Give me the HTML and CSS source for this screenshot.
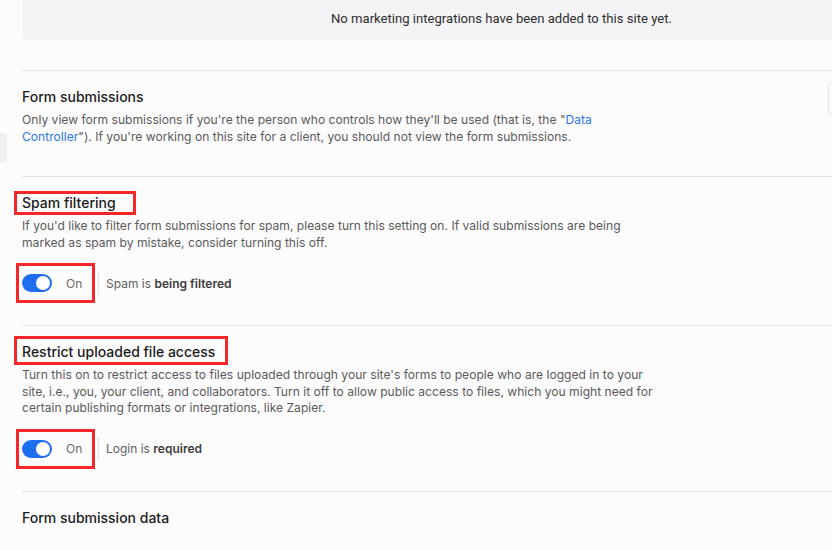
FILE: index.html
```html
<!DOCTYPE html>
<html lang="en">

<head>
    <meta charset="UTF-8">
    <meta name="viewport" content="width=device-width, initial-scale=1.0">
    <title>Form settings</title>
    <link rel="stylesheet" href="styles.css">
</head>

<body>

    <!-- bits of neighbouring panels peeking in -->
    <div class="edge-tab edge-left"></div>
    <div class="edge-tab edge-right"></div>

    <div class="panel">

        <!-- Marketing integrations -->
        <div class="empty-box">No marketing integrations have been added to this site yet.</div>

        <!-- Form submissions -->
        <div class="section first">
            <h3 class="section-title">Form submissions</h3>
            <p class="section-text">
                Only view form submissions if you're the person who controls how they'll be used (that is, the "<a href="#">Data Controller</a>"). If you're working on this site for a client, you should not view the form submissions.
            </p>
        </div>

        <!-- Spam filtering -->
        <div class="section">
            <h3 class="section-title"><span class="marked mark-title">Spam filtering</span></h3>
            <p class="section-text">
                If you'd like to filter form submissions for spam, please turn this setting on. If valid submissions are being marked as spam by mistake, consider turning this off.
            </p>
            <div class="toggle-row">
                <div class="marked mark-toggle toggle-wrap">
                    <span class="toggle on"><span class="knob"></span></span>
                    <span class="toggle-label">On</span>
                </div>
                <span class="divider"></span>
                <span class="status">Spam is <b>being filtered</b></span>
            </div>
        </div>

        <!-- Restrict uploaded file access -->
        <div class="section">
            <h3 class="section-title"><span class="marked mark-title wide">Restrict uploaded file access</span></h3>
            <p class="section-text">
                Turn this on to restrict access to files uploaded through your site's forms to people who are logged in to your site, i.e., you, your client, and collaborators. Turn it off to allow public access to files, which you might need for certain publishing formats or integrations, like Zapier.
            </p>
            <div class="toggle-row">
                <div class="marked mark-toggle toggle-wrap">
                    <span class="toggle on"><span class="knob"></span></span>
                    <span class="toggle-label">On</span>
                </div>
                <span class="divider"></span>
                <span class="status">Login is <b>required</b></span>
            </div>
        </div>

        <!-- Form submission data -->
        <div class="section">
            <h3 class="section-title">Form submission data</h3>
        </div>

    </div>

</body>

</html>
```

FILE: styles.css
```css
/* General Reset */
body {
    margin: 0;
    font-family: Inter, "Noto Sans", Arial, sans-serif;
    background: #fdfcfd;
    color: #1e1e1e;
    overflow: hidden;
}

.panel {
    margin-left: 22px;
    margin-right: -20px;
}

/* Empty state box */
.empty-box {
    background: #f4f3f5;
    height: 40px;
    line-height: 38px;
    border-radius: 0 0 4px 6px;
    font-family: Roboto, Arial, sans-serif;
    font-size: 13.1px;
    color: #2e2e2e;
    padding-left: 309px;
    margin-bottom: 30px;
}

/* Sections */
.section {
    border-top: 1px solid #e3e2e4;
    padding: 16px 0 30px;
}

.section.first {
    padding-bottom: 31px;
}

.section-title {
    margin: 0;
    font-size: 14px;
    line-height: 20px;
    font-weight: 500;
    color: #1b1b1b;
}

.section-text {
    margin: 5px 0 0;
    max-width: 636px;
    font-size: 12.1px;
    line-height: 16.5px;
    color: #5a5a5a;
}

.section-text a {
    color: #2a78e4;
    text-decoration: none;
}

/* Toggle row */
.toggle-row {
    display: flex;
    align-items: center;
    height: 24px;
    margin-top: 20px;
}

.toggle-wrap {
    display: flex;
    align-items: center;
    width: 70px;
}

.toggle {
    display: inline-flex;
    align-items: center;
    width: 30px;
    height: 18px;
    border-radius: 9px;
    background: #c9c9cd;
    box-sizing: border-box;
    padding: 2px;
}

.toggle.on {
    background: #1d6ff0;
    justify-content: flex-end;
}

.knob {
    width: 14px;
    height: 14px;
    border-radius: 50%;
    background: #fff;
}

.toggle-label {
    margin-left: 14px;
    font-size: 12px;
    color: #6a6a6a;
}

.divider {
    width: 1px;
    height: 24px;
    background: #e0dfe2;
    margin: 0 7px 0 6px;
}

.status {
    font-size: 12px;
    color: #5e5e5e;
}

.status b {
    font-weight: 600;
    color: #3d3d3d;
}

/* Red highlight boxes (annotation) */
.marked {
    position: relative;
}

.marked::after {
    content: '';
    position: absolute;
    border: 3px solid #f4282a;
    pointer-events: none;
}

.mark-title {
    display: inline-block;
}

.mark-title::after {
    left: -8px;
    right: -20px;
    top: -2px;
    bottom: -2px;
}

.mark-title.wide::after {
    right: -13px;
    top: -6px;
    bottom: -3px;
}

.mark-toggle::after {
    left: -6px;
    right: -3px;
    top: -11px;
    bottom: -11px;
}

/* Neighbouring panel edges */
.edge-tab {
    position: fixed;
    background: #efeef1;
    border-radius: 4px;
}

.edge-left {
    left: -6px;
    top: 133px;
    width: 13px;
    height: 29px;
}

.edge-right {
    right: -10px;
    top: 82px;
    width: 12px;
    height: 32px;
    border: 1px solid #e6e5e8;
    background: #fbfafc;
}
```
